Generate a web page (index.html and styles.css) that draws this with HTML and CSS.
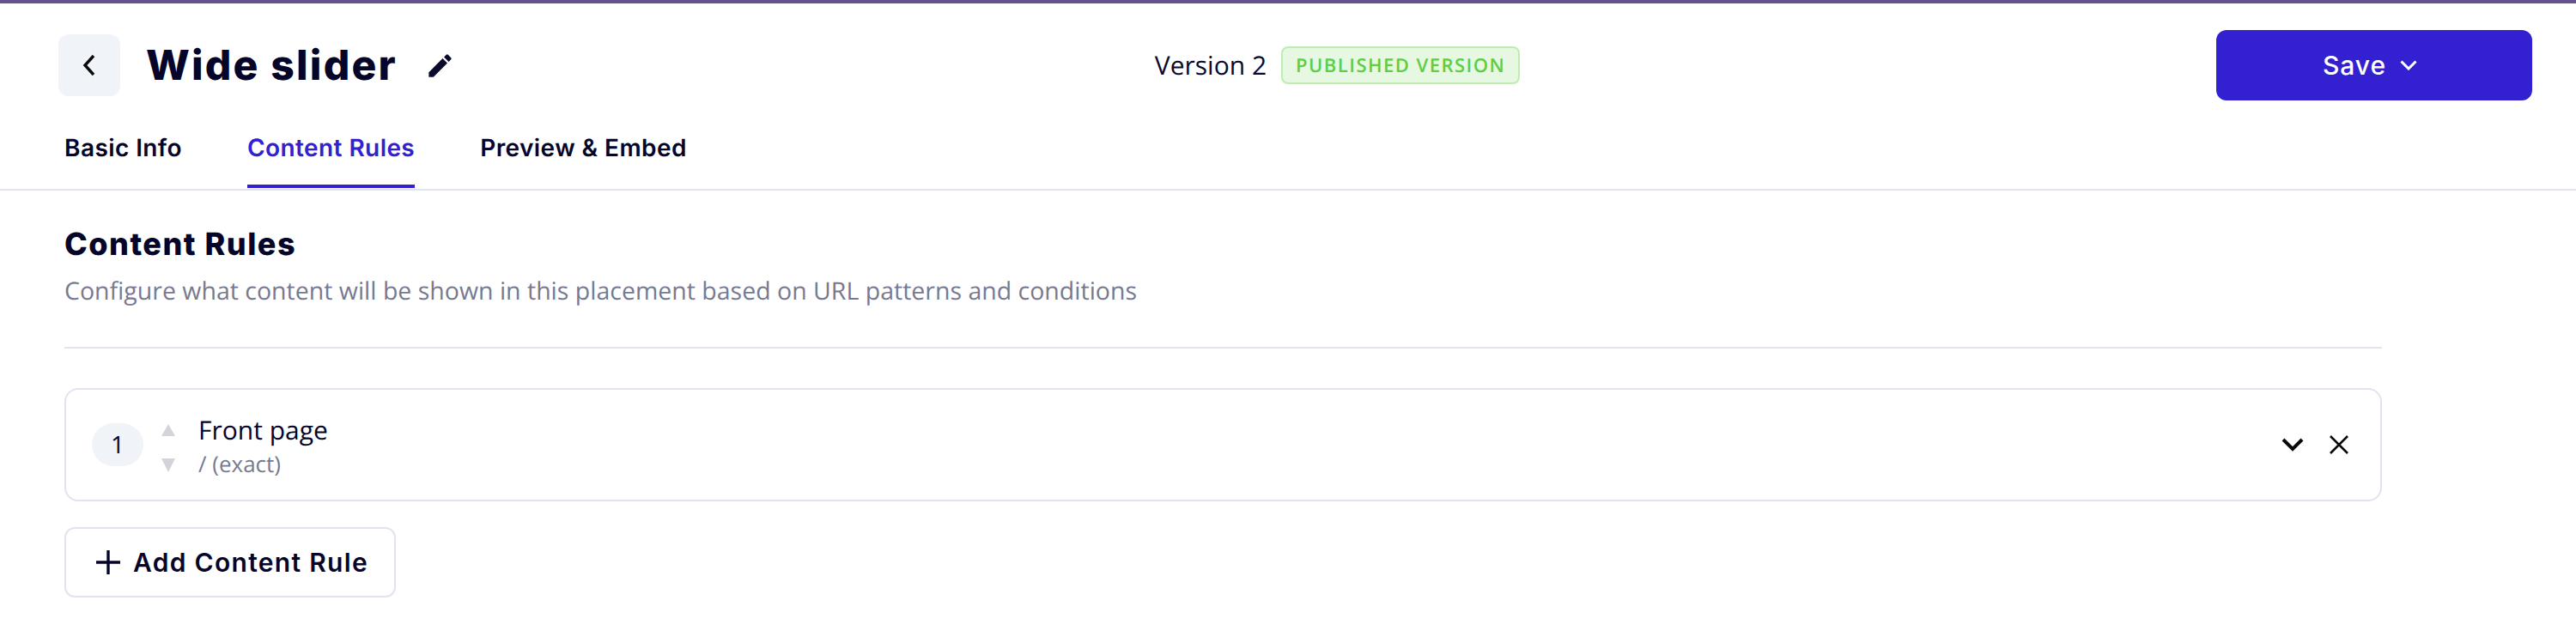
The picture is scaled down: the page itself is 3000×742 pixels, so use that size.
FILE: index.html
```html
<!DOCTYPE html>
<html lang="en">
<head>
<meta charset="utf-8">
<title>Wide slider</title>
<link rel="stylesheet" href="styles.css">
</head>
<body>
<div class="topline"></div>
<header class="header">
  <div class="titlebar">
    <div class="title-left">
      <button class="back" type="button" aria-label="Back">
        <svg width="20" height="28" viewBox="0 0 20 28"><path d="M15 3 5 14l10 11" fill="none" stroke="#0a0a0a" stroke-width="3.4"/></svg>
      </button>
      <h1 class="page-title">Wide slider</h1>
      <svg class="pencil" width="35" height="35" viewBox="0 0 24 24"><path d="M3 17.25V21h3.75L17.81 9.94l-3.75-3.75L3 17.25zM20.71 7.04a1 1 0 0 0 0-1.41l-2.34-2.34a1 1 0 0 0-1.41 0l-1.83 1.83 3.75 3.75 1.83-1.83z" fill="#0a0a2a"/></svg>
    </div>
    <div class="title-center">
      <span class="version">Version 2</span>
      <span class="badge">PUBLISHED VERSION</span>
    </div>
    <div class="title-right">
      <button class="save" type="button">
        <span>Save</span>
        <svg width="20" height="12" viewBox="0 0 20 12"><path d="M1.500 1.500 10 10l8.500-8.500" fill="none" stroke="#fff" stroke-width="3"/></svg>
      </button>
    </div>
  </div>
  <nav class="tabs">
    <a class="tab">Basic Info</a>
    <a class="tab active">Content Rules</a>
    <a class="tab">Preview &amp; Embed</a>
  </nav>
</header>
<main class="main">
  <section class="section-head">
    <h2 class="section-title">Content Rules</h2>
    <p class="section-desc">Configure what content will be shown in this placement based on URL patterns and conditions</p>
  </section>
  <div class="rule">
    <span class="rule-num">1</span>
    <div class="arrows">
      <svg width="16" height="14" viewBox="0 0 16 14"><path d="M8 0l8 14H0z" fill="#d3d4da"/></svg>
      <svg width="16" height="16" viewBox="0 0 16 16"><path d="M0 0h16L8 16z" fill="#d3d4da"/></svg>
    </div>
    <div class="rule-text">
      <div class="rule-name">Front page</div>
      <div class="rule-path">/ (exact)</div>
    </div>
    <div class="rule-actions">
      <svg width="26" height="16" viewBox="0 0 26 16"><path d="M2 2l11 11L24 2" fill="none" stroke="#0a0a0a" stroke-width="4"/></svg>
      <svg width="22" height="22" viewBox="0 0 22 22"><path d="M1 1l20 20M21 1 1 21" fill="none" stroke="#0a0a0a" stroke-width="2.600"/></svg>
    </div>
  </div>
  <button class="add" type="button">
    <svg width="28" height="28" viewBox="0 0 28 28"><path d="M14 0v28M0 14h28" fill="none" stroke="#05052a" stroke-width="3.400"/></svg>
    <span>Add Content Rule</span>
  </button>
</main>
</body>
</html>
```
FILE: styles.css
```css
* { box-sizing: border-box; }
html, body { margin: 0; padding: 0; background: #fff; }
body { font-family: "Open Sans", "Noto Sans", sans-serif; color: #05052a; height: 742px; overflow: hidden; text-rendering: geometricPrecision; }
button { font: inherit; cursor: pointer; }
.topline { height: 4px; background: #675290; }
.header { border-bottom: 2px solid #e0e4ec; height: 218px; }
.titlebar { display: flex; justify-content: space-between; align-items: center; padding: 31px 51px 0 68px; height: 113px; }
.title-left { display: flex; align-items: center; width: 466px; }
.back { width: 72px; height: 72px; border: 0; border-radius: 12px; background: #f0f3f8; display: flex; align-items: center; justify-content: center; padding: 0; }
.page-title { margin: 0 0 0 30px; font: 800 48px/1 Inter, sans-serif; letter-spacing: 2.2px; color: #05052a; white-space: nowrap; }
.pencil { margin-left: 32px; flex: none; }
.title-center { display: flex; align-items: center; gap: 17px; }
.version { font-size: 30px; line-height: 44px; color: #0a0a2c; }
.badge { height: 44px; padding: 0 15px; border: 2px solid #bdeeb0; border-radius: 8px; background: #e6f7e2; color: #5ccf42; font-size: 22px; font-weight: 600; letter-spacing: 1.47px; line-height: 40px; white-space: nowrap; }
.title-right { display: flex; justify-content: flex-end; }
.save { width: 368px; height: 82px; border: 0; border-radius: 12px; background: #3320d0; color: #fff; display: flex; align-items: center; justify-content: center; gap: 16px; font: 500 30px/1 Inter, sans-serif; letter-spacing: 1px; padding: 0 10px 0 0; }
.tabs { display: flex; gap: 76px; padding: 0 0 0 75px; margin-top: 30px; }
.tab { display: block; height: 72px; font: 600 28px/50px Inter, sans-serif; letter-spacing: 0.42px; color: #05052a; }
.tab.active { color: #3320d0; border-bottom: 4px solid #3320d0; }
.main { padding: 0 226px 0 75px; }
.section-head { border-bottom: 2px solid #e0e4f0; height: 184px; padding-top: 40px; }
.section-title { margin: 0; font: 800 36px/44px Inter, sans-serif; letter-spacing: 1.5px; color: #05052a; }
.section-desc { margin: 13px 0 0; font-size: 28.5px; line-height: 40px; color: #767a90; }
.rule { margin-top: 46px; height: 132px; border: 2px solid #e0e4f0; border-radius: 16px; display: flex; align-items: center; padding: 0 32px 0 30px; }
.rule-num { width: 60px; height: 50px; border-radius: 25px; background: #f0f3f8; display: flex; align-items: center; justify-content: center; font-size: 28px; color: #05052a; }
.arrows { display: flex; flex-direction: column; gap: 26px; margin-left: 21px; padding-top: 8px; }
.arrows svg { display: block; }
.rule-text { margin-left: 27px; flex: 1; padding-top: 2px; }
.rule-name { font-size: 30px; line-height: 42px; color: #05052a; }
.rule-path { font-size: 26px; line-height: 36px; color: #767a90; }
.rule-actions { display: flex; align-items: center; gap: 30px; padding-right: 5px; }
.rule-actions svg { display: block; }
.add { margin-top: 30px; width: 386px; height: 82px; border: 2px solid #e0e4f0; border-radius: 12px; background: #fff; display: flex; align-items: center; gap: 15px; padding: 0 0 0 35px; font: 600 30px/1 Inter, sans-serif; letter-spacing: 1.3px; color: #05052a; }
```
